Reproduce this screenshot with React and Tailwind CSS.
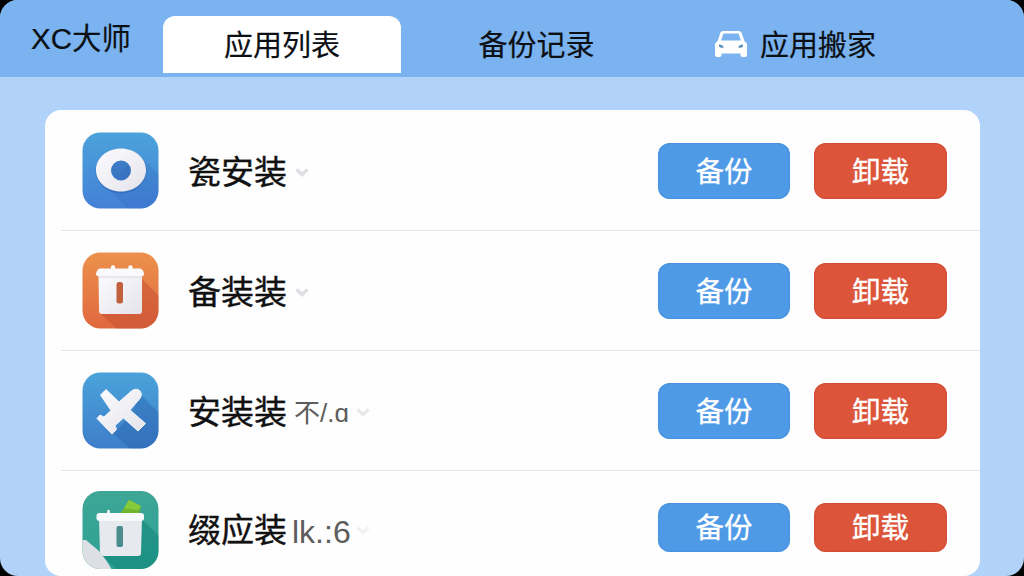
function Arrow({ className }) {
  return (
    <svg viewBox="0 0 14 9" className={`w-3.5 h-[9px] ${className}`} fill="none" strokeWidth="3.4">
      <path d="M1.5 1.5 7 6.6l5.5-5.1" stroke="currentColor" />
    </svg>
  );
}

function CarIcon() {
  return (
    <svg viewBox="0 0 34 28" className="w-[34px] h-7">
      <path
        fillRule="evenodd"
        fill="#fff"
        d="M9.500 1h15c1.800 0 2.800.800 3.300 2.300L30.400 11 33 13.500V25c0 1.300-.700 2-2 2h-2.500c-1.300 0-2-.700-2-2v-1.500H7.500V25c0 1.300-.700 2-2 2H3c-1.300 0-2-.700-2-2V13.500L3.600 11l2.600-7.700C6.700 1.800 7.700 1 9.500 1ZM9.500 3.500 7 10.500h20L24.500 3.500Z"
      />
      <path
        fill="#5b93bd"
        d="M5 14.500v2c1.200 1.400 3 1.500 4.800.9-.3-1.700-2.300-2.900-4.800-2.900Zm24 0c-2.500 0-4.500 1.200-4.800 2.900 1.800.6 3.600.5 4.800-.9Z"
      />
    </svg>
  );
}

function IconBase({ id, from, to, children }) {
  return (
    <svg viewBox="0 0 77 77" className="w-[77px] h-[77px] shrink-0">
      <defs>
        <linearGradient id={id} x1="0" y1="0" x2="0" y2="1">
          <stop offset="0" stopColor={from} />
          <stop offset="1" stopColor={to} />
        </linearGradient>
        <linearGradient id={`${id}-body`} x1="0" y1="0" x2="1" y2="1">
          <stop offset="0" stopColor="#fbfbff" />
          <stop offset="1" stopColor="#e3e3ea" />
        </linearGradient>
        <clipPath id={`${id}-clip`}>
          <rect x="0.5" y="0.5" width="76" height="76" rx="18" />
        </clipPath>
      </defs>
      <g clipPath={`url(#${id}-clip)`}>
        <rect width="77" height="77" fill={`url(#${id})`} />
        {children}
      </g>
    </svg>
  );
}

function RingIcon() {
  return (
    <IconBase id="ring" from="#4ba3da" to="#4480d6">
      <path d="M57 24 77 42v35H46L23 54Z" fill="#2a58b4" opacity=".2" />
      <ellipse cx="39" cy="39" rx="25.500" ry="22.500" fill="#2f62b2" opacity=".5" />
      <path
        fillRule="evenodd"
        fill="url(#ring-body)"
        d="M39 16.500c14 0 25 9.500 25 21.500S53 59.500 39 59.500 14 50 14 38s11-21.500 25-21.500Zm0 12a10 10 0 1 0 0 20 10 10 0 0 0 0-20Z"
      />
    </IconBase>
  );
}

function BoxIcon() {
  return (
    <IconBase id="box" from="#ec914c" to="#e0683e">
      <path d="M60 27 77 44v33H35L18 61Z" fill="#c04a30" opacity=".45" />
      <circle cx="31" cy="15.500" r="2.200" fill="#fff" />
      <circle cx="48.500" cy="15.500" r="2.200" fill="#fff" />
      <path d="M16.500 23h43.500v36c0 2-1 3-3 3H20c-2 0-3-1-3-3Z" fill="url(#box-body)" />
      <path d="M18 16.500h40c2 0 4.500 4 4 6-.5 1.500-2 2-3 2H17.500c-2 0-4-1-3.500-3s2-5 4-5Z" fill="#faf9fb" />
      <path d="M17 25h43" stroke="#ddd6d9" />
      <rect x="34.500" y="30" width="6.500" height="21.500" rx="2.500" fill="#c0603c" />
    </IconBase>
  );
}

function PlaneIcon() {
  return (
    <IconBase id="plane" from="#4ba3da" to="#3e7ec9">
      <path d="M58 22 77 41v36H48L31 61l18-17Z" fill="#235aa6" opacity=".35" />
      <path
        fill="url(#plane-body)"
        stroke="#f2f4fa"
        strokeLinejoin="round"
        d="M24 17.500 37 30 49.500 19c3-2.500 7-2 8.500 0 2 2.500 1.500 5.500-.5 8L48 38l15.500 13.500L56 59 41.500 46l-8.500 7.500 1.500 4-4.500 4.500L15 46.500l3-3.500 4 2 7-6.500L18.500 23Z"
      />
    </IconBase>
  );
}

function GreenBoxIcon() {
  return (
    <svg viewBox="0 0 77 80" className="w-[77px] h-20 shrink-0">
      <defs>
        <linearGradient id="green" x1="0" y1="0" x2="0" y2="1">
          <stop offset="0" stopColor="#3ea697" />
          <stop offset="1" stopColor="#2ca193" />
        </linearGradient>
        <clipPath id="green-clip">
          <rect x="0.5" y="1" width="76" height="78" rx="18" />
        </clipPath>
      </defs>
      <g clipPath="url(#green-clip)">
        <rect width="77" height="80" fill="url(#green)" />
        <path d="M61 30 77 46v34H36L19 65Z" fill="#087b70" opacity=".4" />
        <path d="m38 24 9-14 12 6-2 9Z" fill="#70b52f" />
        <path d="m42 18 5-8 12 6-3 4Z" fill="#86cc3a" />
        <path d="M26.500 25v-4" stroke="#fff" strokeWidth="2.500" strokeLinecap="round" />
        <path d="M17 29h43l-1 34c0 2-1 3-3 3H21c-2 0-3-1-3-3Z" fill="#e6e9ee" />
        <rect x="14.500" y="23" width="47.500" height="8" rx="3" fill="#f7fafc" />
        <rect x="34.500" y="36" width="6.500" height="21" rx="2" fill="#4a8b8d" />
        <path d="M0 50h4c4 4 9 7 13 11 3 4 9 11 13 19H0Z" fill="#dcdfe3" />
      </g>
    </svg>
  );
}

const apps = [
  { icon: RingIcon, name: "瓷安装", row: "h-[121px] pt-[22px]", arrow: "ml-2 mt-9 text-[#dedfe2]" },
  { icon: BoxIcon, name: "备装装", row: "h-[120px] pt-[21px]", arrow: "ml-2 mt-9 text-[#dedfe2]" },
  {
    icon: PlaneIcon,
    name: "安装装",
    extra: "不/.ɑ",
    row: "h-[120px] pt-[21px]",
    extraClass: "ml-[7px] w-[54px] mt-4 text-[26px]",
    arrow: "ml-2 mt-9 text-[#e8e9ea]",
  },
  {
    icon: GreenBoxIcon,
    name: "缀应装",
    extra: "lk.:6",
    row: "h-[105px] pt-[19px]",
    extraClass: "ml-[5px] w-[60px] mt-[17px] text-[32px]",
    arrow: "ml-1 mt-9 text-[#f1f2f3]",
    short: true,
  },
];

function AppRow({ app, last }) {
  const Icon = app.icon;
  const size = app.short ? "h-[49px] mt-[13px] pb-0.5" : "h-14 mt-[11px] pb-0.5";

  return (
    <div className={`relative flex items-start pl-[37px] pr-[33px] ${app.row}`}>
      <Icon />
      <span className="ml-[29px] mt-[13px] text-[33px] leading-[50px] text-[#111] [-webkit-text-stroke:0.4px_#111]">
        {app.name}
      </span>
      {app.extra && (
        <span
          className={`leading-[50px] whitespace-nowrap text-[#5c5c5c] font-['Liberation_Sans','Noto_Sans_CJK_SC',sans-serif] ${app.extraClass}`}
        >
          {app.extra}
        </span>
      )}
      <Arrow className={app.arrow} />

      <div className="ml-auto flex gap-6 text-[28.5px] text-white [-webkit-text-stroke:0.3px_#fff] [text-shadow:1px_1px_2px_rgba(0,0,0,0.25)]">
        <button className={`w-[132px] rounded-xl bg-[#4f9ae7] shadow-[inset_0_0_2px_#317fd0] ${size}`}>
          备份
        </button>
        <button className={`w-[133px] rounded-xl bg-[#dc553a] shadow-[inset_0_0_2px_#b83922] ${size}`}>
          卸载
        </button>
      </div>

      {!last && <div className="absolute bottom-0 left-4 right-0 h-px bg-[#e0e6e9]" />}
    </div>
  );
}

export default function App() {
  return (
    <div className="w-[1024px] h-[576px] bg-black font-['Noto_Sans_CJK_SC',sans-serif]">
      <div className="flex flex-col h-full overflow-hidden rounded-[18px] bg-[#b1d2f9]">
        {/* tabs */}
        <header className="flex h-[77px] shrink-0 bg-[#7ab3ef] text-[29px] text-[#0c1014] [-webkit-text-stroke:0.2px_#0c1014]">
          <h1 className="w-[163px] pl-[31px] pt-[18px] leading-[42px] text-[29.5px] whitespace-nowrap font-['Liberation_Sans','Noto_Sans_CJK_SC',sans-serif]">
            XC大师
          </h1>
          <button className="w-[238px] h-[57px] mt-4 pb-0.5 rounded-t-xl bg-white">应用列表</button>
          <button className="w-[271px] h-[57px] mt-4 pb-0.5">备份记录</button>
          <button className="ml-[42px] h-[57px] mt-4 pb-0.5 flex items-center gap-3">
            <CarIcon />
            应用搬家
          </button>
        </header>

        {/* app list */}
        <main className="ml-[45px] mr-11 mt-[33px] h-[466px] overflow-hidden rounded-2xl bg-[#fefefe]">
          {apps.map((app, i) => (
            <AppRow key={app.name} app={app} last={i === apps.length - 1} />
          ))}
        </main>
      </div>
    </div>
  );
}
